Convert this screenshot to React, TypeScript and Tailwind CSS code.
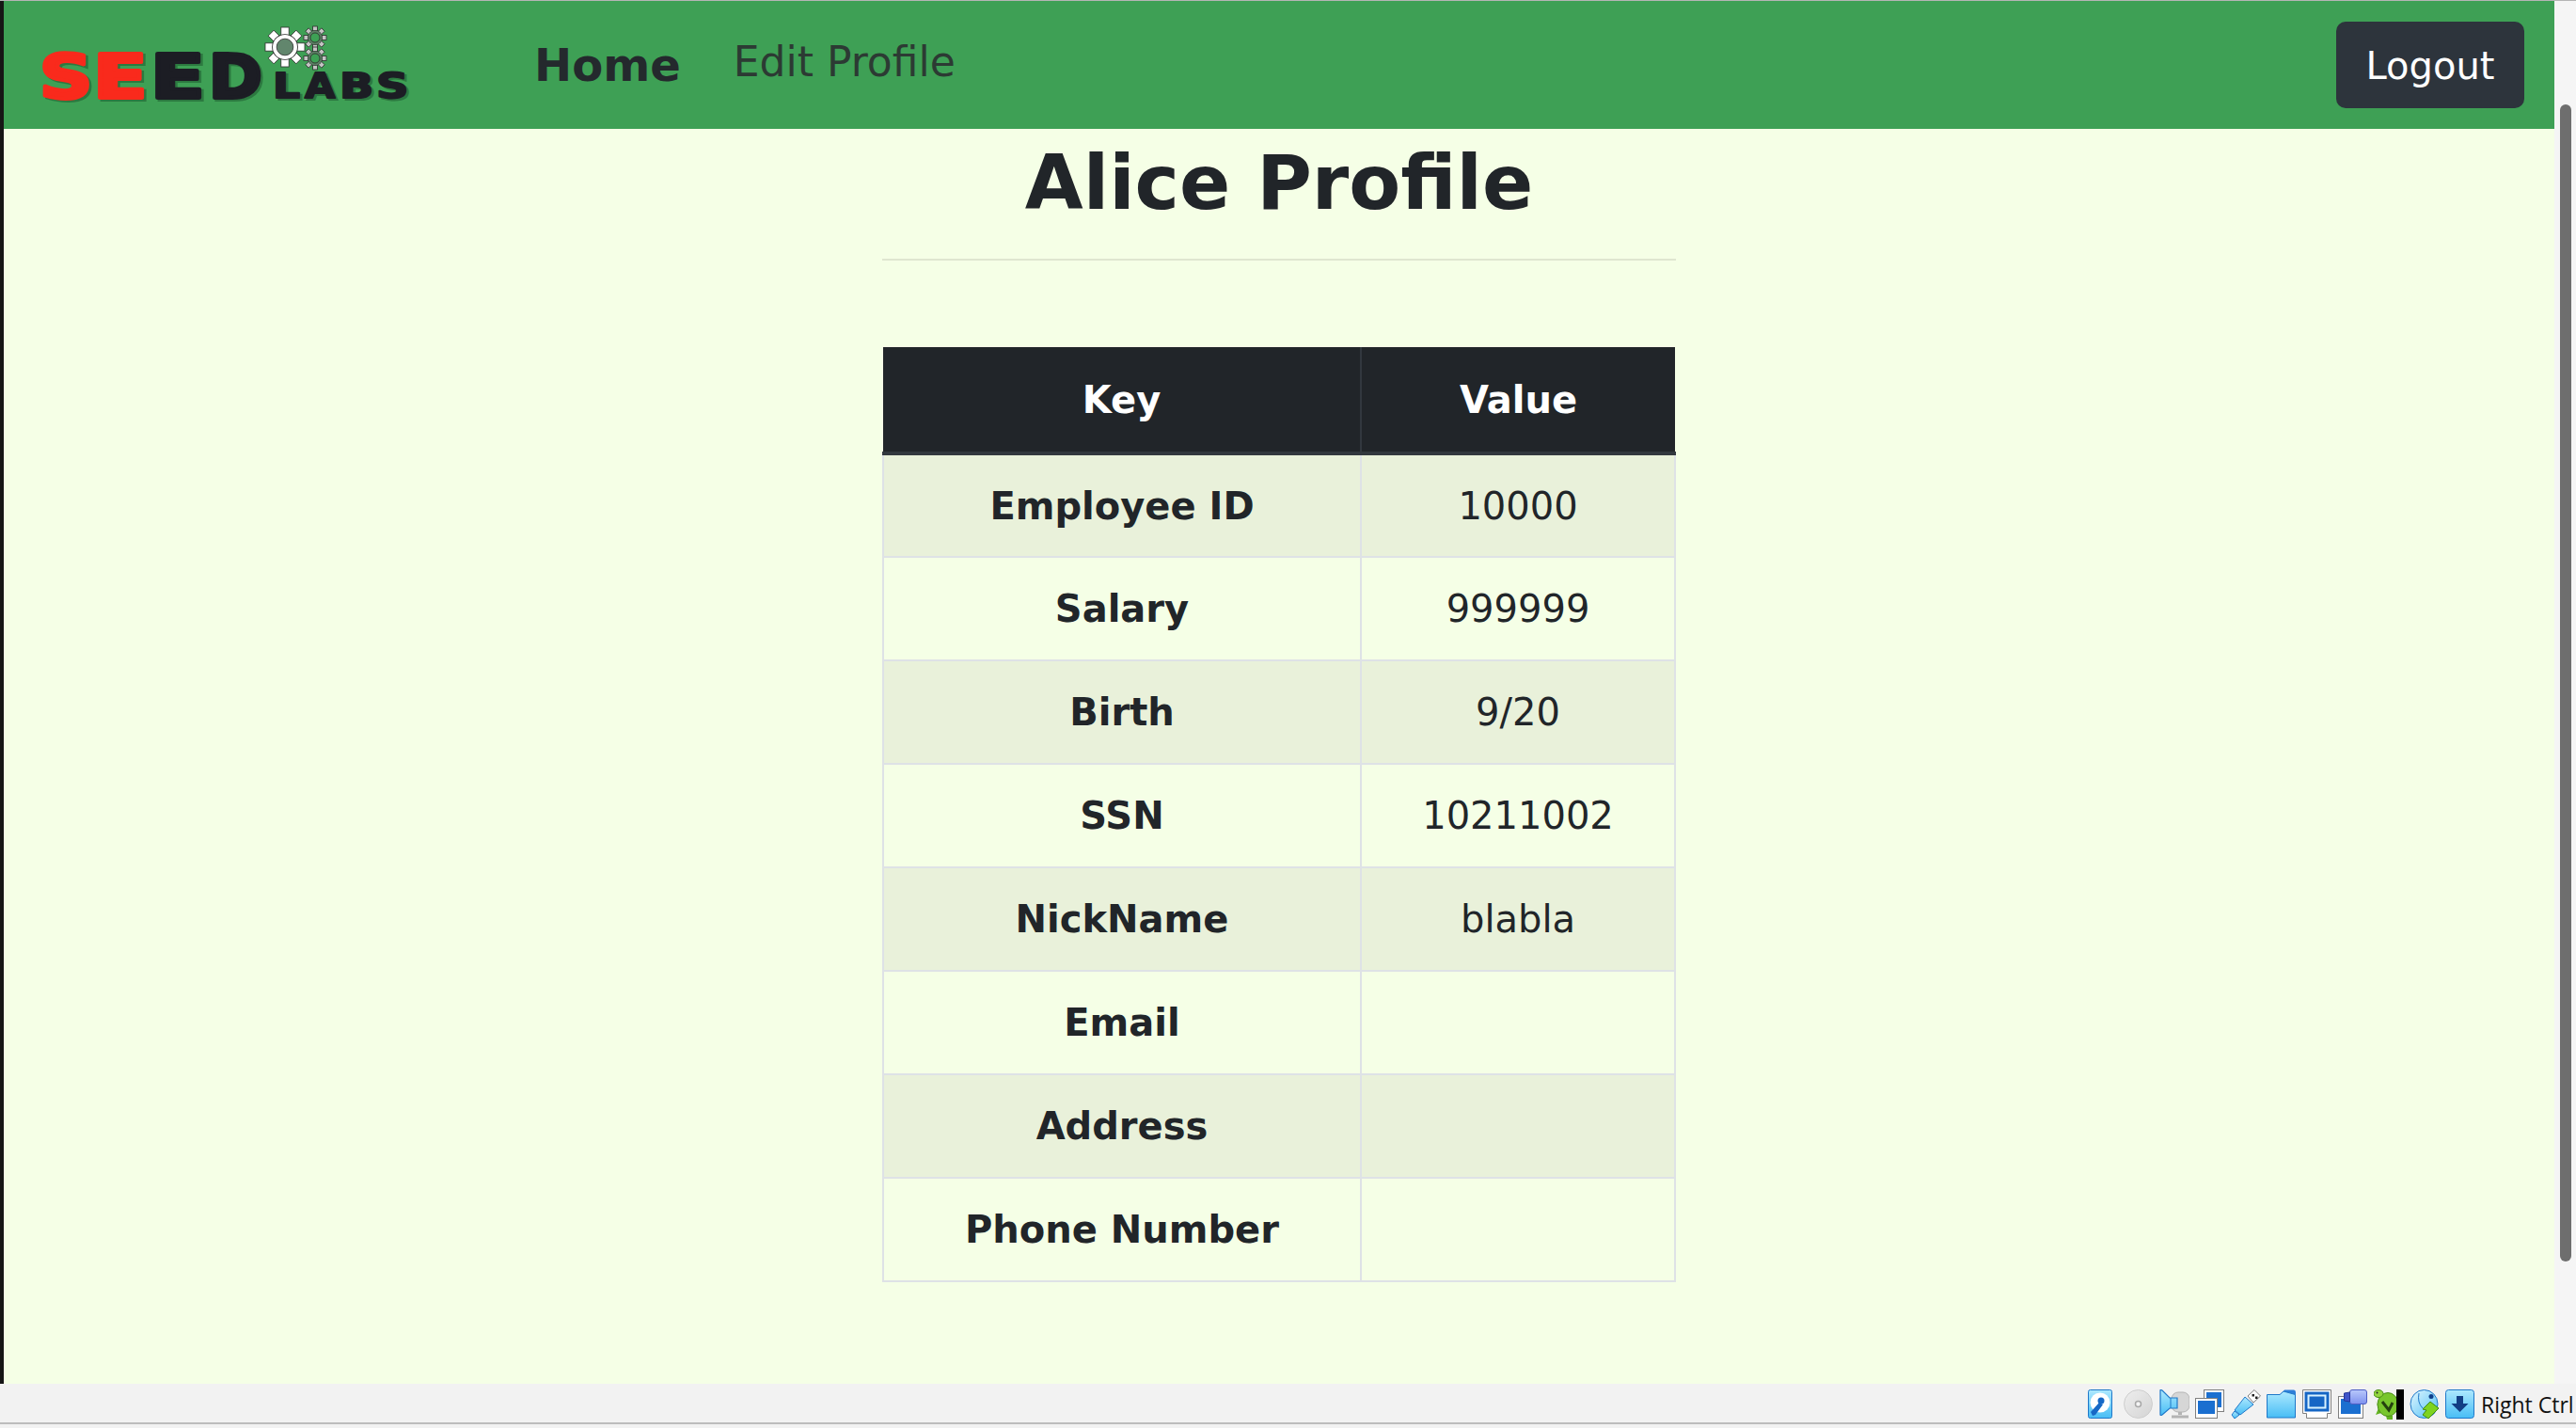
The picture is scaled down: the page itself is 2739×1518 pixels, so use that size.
// App.tsx — SEED Labs employee profile page inside a VirtualBox window.

const PROFILE_ROWS = [
  { key: 'Employee ID', value: '10000' },
  { key: 'Salary', value: '999999' },
  { key: 'Birth', value: '9/20' },
  { key: 'SSN', value: '10211002' },
  { key: 'NickName', value: 'blabla' },
  { key: 'Email', value: '' },
  { key: 'Address', value: '' },
  { key: 'Phone Number', value: '' },
]

function Gear({ x, y, r, dim }: { x: number; y: number; r: number; dim?: boolean }) {
  const teeth = [0, 45, 90, 135, 180, 225, 270, 315]
  const fill = dim ? '#c4c4c4' : '#ffffff'
  return (
    <g transform={`translate(${x} ${y})`}>
      {teeth.map((a) => (
        <rect
          key={a}
          x={-r * 0.2}
          y={-r}
          width={r * 0.4}
          height={r * 0.42}
          fill={fill}
          stroke="#2b2b2b"
          strokeWidth="0.8"
          transform={`rotate(${a})`}
        />
      ))}
      <circle r={r * 0.66} fill="#2b2b2b" />
      <circle r={r * 0.62} fill={dim ? '#5b7f64' : '#ffffff'} />
      <circle r={r * 0.42} fill={dim ? '#3ea055' : '#62866d'} stroke="#2b2b2b" strokeWidth="0.8" />
    </g>
  )
}

function LogoLetter({ ch, x, sx, size, stroke = 4, fill }: { ch: string; x: number; sx: number; size: number; stroke?: number; fill: string }) {
  return (
    <g transform={`translate(${x} 90) scale(${sx} 1)`}>
      <text x="2" y="2" fontSize={size} fill="#1f5a30" opacity="0.55" stroke="#1f5a30" strokeWidth={stroke}>
        {ch}
      </text>
      <text x="0" y="0" fontSize={size} fill={fill} stroke={fill} strokeWidth={stroke} strokeLinejoin="round">
        {ch}
      </text>
    </g>
  )
}

function SeedLogo() {
  return (
    <svg width="414" height="110" viewBox="-4 0 414 110" className="shrink-0">
      <g fontFamily='"DejaVu Sans", sans-serif' fontWeight="700">
        <LogoLetter ch="S" x={-2} sx={1.22} size={64} fill="#f92a1c" />
        <LogoLetter ch="E" x={55} sx={1.32} size={64} fill="#f92a1c" />
        <LogoLetter ch="E" x={116} sx={1.32} size={64} fill="#1c1d24" />
        <LogoLetter ch="D" x={178} sx={1.07} size={64} fill="#1c1d24" />
        <LogoLetter ch="L" x={246} sx={1.2} size={38} stroke={2} fill="#1c1d24" />
        <LogoLetter ch="A" x={280} sx={1.1} size={38} stroke={2} fill="#1c1d24" />
        <LogoLetter ch="B" x={317} sx={1.25} size={38} stroke={2} fill="#1c1d24" />
        <LogoLetter ch="S" x={356} sx={1.26} size={38} stroke={2} fill="#1c1d24" />
      </g>
      <Gear x={259} y={36} r={21} />
      <Gear x={291} y={26} r={12} dim />
      <Gear x={291} y={48} r={12} dim />
    </svg>
  )
}

function SkyGradient({ id }: { id: string }) {
  return (
    <defs>
      <linearGradient id={id} x1="0" y1="0" x2="0" y2="1">
        <stop offset="0" stopColor="#aee9fe" />
        <stop offset="1" stopColor="#48bdf5" />
      </linearGradient>
    </defs>
  )
}

function HardDiskIcon() {
  return (
    <svg width="26" height="31" viewBox="0 0 26 31">
      <SkyGradient id="hd" />
      <rect x="0.5" y="0.5" width="25" height="30" rx="2" fill="url(#hd)" stroke="#1f78c9" />
      <circle cx="13" cy="14" r="10.5" fill="#fff" />
      <circle cx="14" cy="12" r="3.5" fill="#1668c6" />
      <path d="M12 14 L3 24 L5 28 L8 27 L16 16 Z" fill="#1668c6" />
    </svg>
  )
}

function DiscIcon() {
  return (
    <svg width="31" height="31" viewBox="0 0 31 31">
      <defs>
        <linearGradient id="cd" x1="0" y1="0" x2="1" y2="1">
          <stop offset="0" stopColor="#eeeeee" />
          <stop offset="1" stopColor="#d4d4d4" />
        </linearGradient>
      </defs>
      <circle cx="15.5" cy="15.5" r="15" fill="url(#cd)" stroke="#cdcdcd" />
      <circle cx="15.5" cy="15.5" r="3" fill="#f4f4f4" stroke="#a8a8a8" strokeWidth="1.5" />
    </svg>
  )
}

function AudioIcon() {
  return (
    <svg width="32" height="31" viewBox="0 0 32 31">
      <SkyGradient id="au" />
      <rect x="13" y="3" width="19" height="21" rx="7" fill="#d6d6d6" stroke="#b4b4b4" />
      <path d="M22 24v3" stroke="#b4b4b4" strokeWidth="4" />
      <path d="M13 29h18" stroke="#b4b4b4" strokeWidth="3" />
      <path d="M1 1 L1 27 Q1 28 3 27 L11 20 L19 20 L19 9 L11 9 L3 1 Q1 0 1 1 Z" fill="url(#au)" stroke="#1f78c9" strokeWidth="1.2" />
      <path d="M12 9 V20" stroke="#1f78c9" />
    </svg>
  )
}

function BlueScreen({ x, y, w, h }: { x: number; y: number; w: number; h: number }) {
  return (
    <>
      <rect x={x + 0.5} y={y + 0.5} width={w - 1} height={h - 1} fill="#fff" stroke="#7f7f7f" />
      <rect x={x + 3} y={y + 3} width={w - 6} height={h - 8} fill="#1b6fd0" />
    </>
  )
}

function NetworkIcon() {
  return (
    <svg width="31" height="31" viewBox="0 0 31 31">
      <BlueScreen x={9} y={0} w={22} h={24} />
      <BlueScreen x={0} y={9} w={24} h={22} />
    </svg>
  )
}

function UsbIcon() {
  return (
    <svg width="32" height="31" viewBox="0 0 32 31">
      <SkyGradient id="usb" />
      <path d="M4 22 L15 8 L24 16 L10 27 Z" fill="url(#usb)" stroke="#1f78c9" />
      <path d="M4 23 L1 27 L4 31 L9 27 Z" fill="url(#usb)" stroke="#1f78c9" />
      <path d="M18 7 L25 0.5 L31.5 7 L24 14 Z" fill="#fff" stroke="#7d7d7d" />
      <rect x="22.5" y="5" width="2.5" height="2.5" fill="#222" />
      <rect x="26" y="7.5" width="2.5" height="2.5" fill="#222" />
    </svg>
  )
}

function FolderIcon() {
  return (
    <svg width="31" height="31" viewBox="0 0 31 31">
      <SkyGradient id="fo" />
      <path d="M14 6 L19 0.5 L29 0.5 Q31 0.5 31 3 L31 8 L14 8 Z" fill="#2f7fd8" />
      <path d="M0.5 5.5 L14 5.5 L18 2 L30.5 5.5 L30.5 30 L0.5 30 Z" fill="url(#fo)" stroke="#1f78c9" />
    </svg>
  )
}

function DisplayIcon() {
  return (
    <svg width="31" height="31" viewBox="0 0 31 31">
      <path d="M0.5 0.5 H30.5 V25.5 H26.5 V30.5 H4.5 V25.5 H0.5 Z" fill="#fff" stroke="#7f7f7f" />
      <rect x="2.5" y="2.5" width="26" height="21" fill="#1666c5" />
      <rect x="6.5" y="6.5" width="18" height="13" fill="none" stroke="#d8f2ff" strokeWidth="2" />
    </svg>
  )
}

function CaptureIcon() {
  return (
    <svg width="31" height="31" viewBox="0 0 31 31">
      <defs>
        <linearGradient id="cam" x1="0" y1="0" x2="0" y2="1">
          <stop offset="0" stopColor="#b8c8fb" />
          <stop offset="1" stopColor="#7e91ee" />
        </linearGradient>
      </defs>
      <BlueScreen x={0} y={7} w={27} h={24} />
      <rect x="12.5" y="0.5" width="18" height="15" rx="2.5" fill="url(#cam)" stroke="#4e5fc4" />
      <path d="M6.5 4 L12.5 3 L12.5 13 L6.5 12 Z" fill="#3f55c9" stroke="#26379b" />
    </svg>
  )
}

function TurtleIcon() {
  return (
    <svg width="32" height="32" viewBox="0 0 32 32">
      <path d="M2 12 L5 20 L2 27 L8 25 Z" fill="#63b322" />
      <path d="M13 28 H20 V32 H14 Z" fill="#63b322" />
      <ellipse cx="15" cy="16" rx="11" ry="12.5" fill="#78c62d" stroke="#4a8d17" />
      <ellipse cx="5" cy="4.5" rx="5" ry="4" fill="#93d63f" stroke="#4a8d17" />
      <circle cx="3.5" cy="3.5" r="1" fill="#222" />
      <path d="M9 13 L16 22 L20 14" fill="none" stroke="#24410f" strokeWidth="3" />
      <rect x="24" y="0" width="8" height="32" fill="#000" />
    </svg>
  )
}

function GlobeIcon() {
  return (
    <svg width="32" height="31" viewBox="0 0 32 31">
      <defs>
        <linearGradient id="gl" x1="0" y1="0" x2="1" y2="1">
          <stop offset="0" stopColor="#e3f7ff" />
          <stop offset="1" stopColor="#4dbff5" />
        </linearGradient>
      </defs>
      <ellipse cx="15.5" cy="15.5" rx="14.5" ry="15" fill="url(#gl)" stroke="#1f78c9" />
      <path d="M10 4 Q8 14 14 20" fill="none" stroke="#1f78c9" />
      <circle cx="23" cy="7.5" r="2.5" fill="#0f3f8a" />
      <path d="M14 21 L22 13 L31 20 L20 31 L14 27 L18 22 Z" fill="#7ed321" stroke="#3f8a12" />
    </svg>
  )
}

function DownloadIcon() {
  return (
    <svg width="31" height="31" viewBox="0 0 31 31">
      <SkyGradient id="dl" />
      <rect x="0.5" y="0.5" width="30" height="30" rx="3" fill="url(#dl)" stroke="#1f78c9" />
      <path d="M12 7 H19 V15 H24.5 L15.5 24 L6.5 15 H12 Z" fill="#123e85" />
    </svg>
  )
}

const STATUS_ICONS = [
  HardDiskIcon,
  DiscIcon,
  AudioIcon,
  NetworkIcon,
  UsbIcon,
  FolderIcon,
  DisplayIcon,
  CaptureIcon,
  TurtleIcon,
  GlobeIcon,
  DownloadIcon,
]

export default function App() {
  return (
    <div className="flex flex-col w-[2739px] h-[1518px] overflow-hidden bg-[#f5f5f5] font-['DejaVu_Sans',sans-serif]">
      <div className="h-px shrink-0 bg-[#b5b5b5]" />

      <div className="flex flex-1 min-h-0">
        <div className="w-1 shrink-0 bg-[#161616]" />

        <div className="flex-1 min-w-0 bg-[#f5ffe6] text-[#212529]">
          {/* Navbar */}
          <nav className="flex items-center h-[136px] bg-[#3ea055] pl-9 pr-8">
            <SeedLogo />
            <a className="ml-[114px] text-[48px] font-bold text-[#24292d]">Home</a>
            <a className="ml-[56px] mb-1.5 text-[44px] text-[#2c3a33]">Edit Profile</a>
            <button className="ml-auto w-[200px] h-[92px] pt-0.5 rounded-[10px] bg-[#2d343c] text-[40px] text-white">
              Logout
            </button>
          </nav>

          {/* Profile */}
          <div className="mx-auto w-[844px]">
            <h1 className="pt-2 text-center text-[80px] leading-[100px] font-bold">Alice Profile</h1>
            <hr className="mt-[30px] h-0.5 border-0 bg-[#dfe6d0]" />
            <table className="mt-[92px] w-full table-fixed border-collapse text-[40px] text-center">
              <colgroup>
                <col className="w-[508px]" />
                <col />
              </colgroup>
              <thead>
                <tr className="h-[113px] bg-[#212529] text-white border-b-4 border-[#32383e]">
                  <th className="font-bold border-r-2 border-[#32383e]">Key</th>
                  <th className="font-bold">Value</th>
                </tr>
              </thead>
              <tbody>
                {PROFILE_ROWS.map((row, i) => (
                  <tr key={row.key} className={i % 2 === 0 ? 'h-[110px] bg-[#e9f1da]' : 'h-[110px]'}>
                    <td className="font-bold border-2 border-[#dee2e6]">{row.key}</td>
                    <td className="border-2 border-[#dee2e6]">{row.value}</td>
                  </tr>
                ))}
              </tbody>
            </table>
          </div>
        </div>

        {/* Scrollbar */}
        <div className="w-[23px] shrink-0 pt-[110px] pl-1.5">
          <div className="w-3 h-[1230px] rounded-full bg-[#6e6e6e]" />
        </div>
      </div>

      {/* VirtualBox status bar */}
      <div className="shrink-0 h-[47px] bg-[#f2f2f2]">
        <div className="flex items-start h-[41px] pt-1.5 pl-[2220px]">
          {STATUS_ICONS.map((Icon, i) => (
            <div key={i} className="w-[38px] shrink-0">
              <Icon />
            </div>
          ))}
          <span className="text-[23px] leading-[32px] text-[#111] whitespace-nowrap font-['Open_Sans',sans-serif]">
            Right Ctrl
          </span>
        </div>
        <div className="h-0.5 bg-[#bdbdbd]" />
      </div>
    </div>
  )
}
